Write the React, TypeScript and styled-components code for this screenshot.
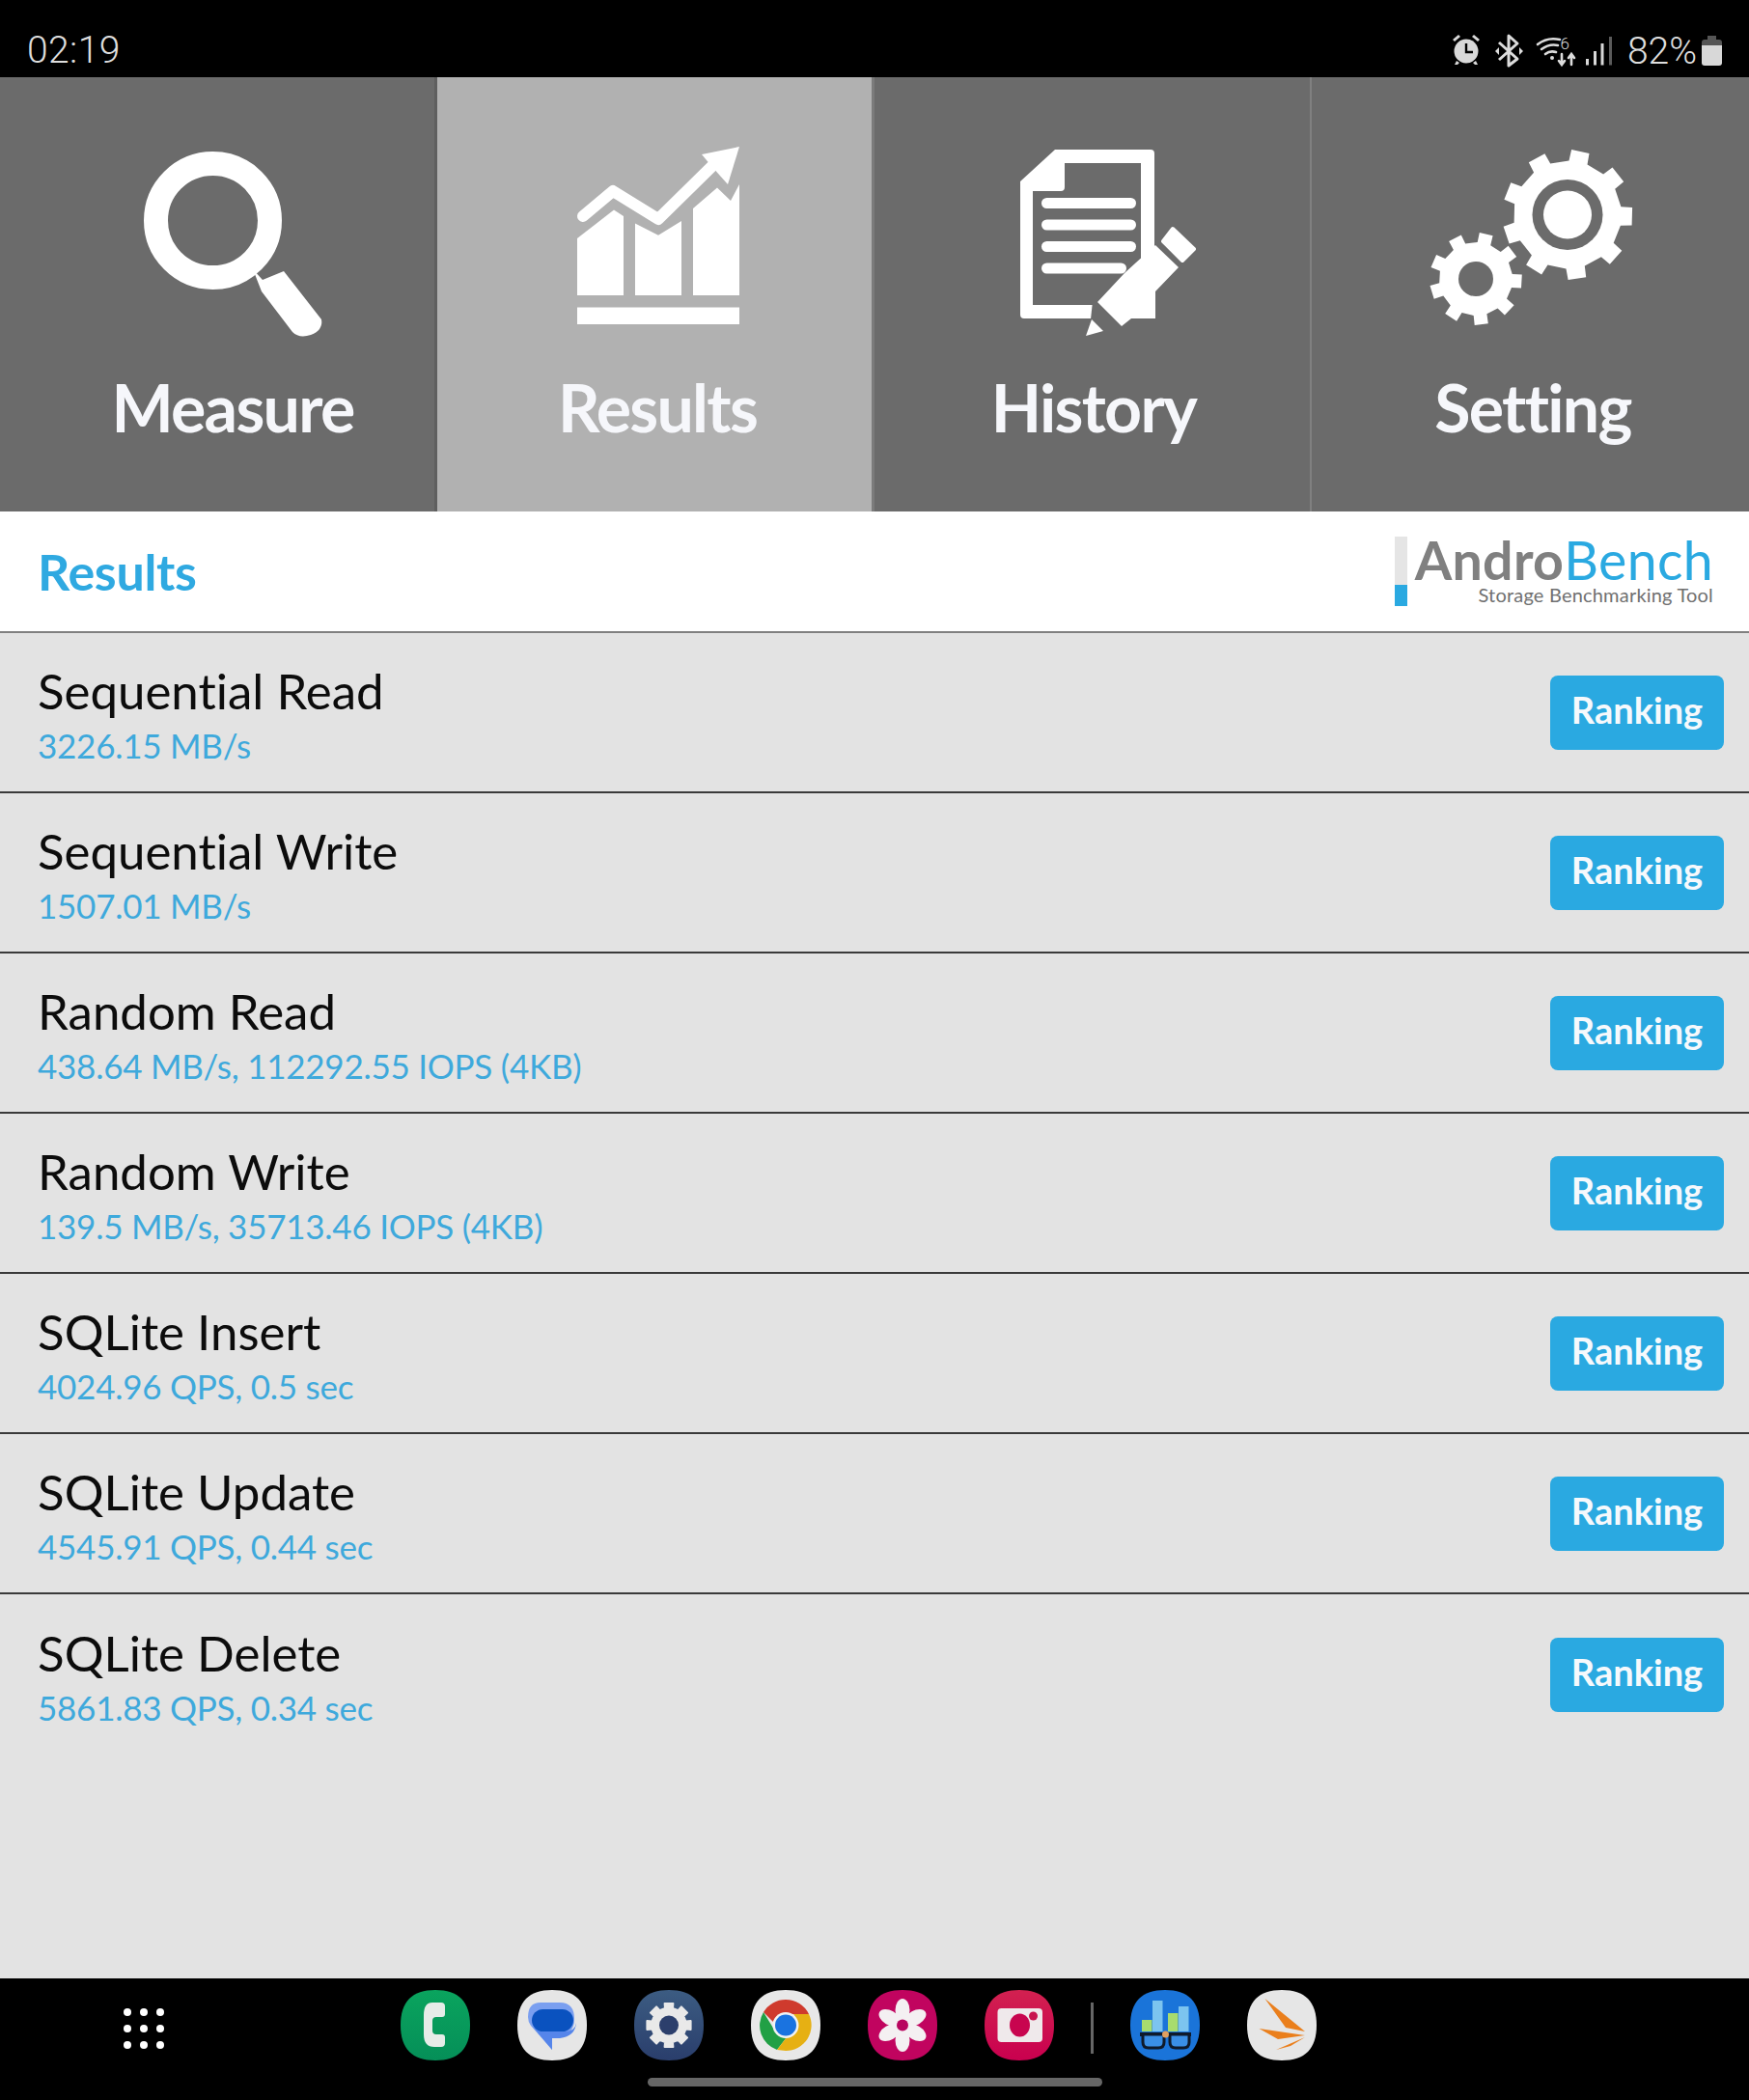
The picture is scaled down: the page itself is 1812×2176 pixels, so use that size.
import React from 'react';
import styled, { createGlobalStyle } from 'styled-components';

const Global = createGlobalStyle`
  html, body { margin: 0; padding: 0; background: #000; }
  * { box-sizing: border-box; }
`;

const TEXT_FONT = `Lato, "Open Sans", "Liberation Sans", sans-serif`;
const BLUE = '#2aa9e1';
const TAB_GREY = '#6b6b6b';
const ACTIVE_GREY = '#b1b1b1';

const Page = styled.div`
  width: 1812px;
  height: 2176px;
  display: flex;
  flex-direction: column;
  background: #e3e3e3;
  font-family: ${TEXT_FONT};
  font-variant-ligatures: none;
`;

const StatusBar = styled.header`
  height: 80px;
  background: #000;
  display: flex;
  align-items: flex-start;
  justify-content: space-between;
  padding: 0 28px 0 28px;
  color: #dedede;
  font-family: Roboto, sans-serif;
  font-weight: 300;
`;
const Clock = styled.span`
  font-size: 39px;
  line-height: 40px;
  padding-top: 32px;
  letter-spacing: 0.4px;
`;
const StatusRight = styled.div`
  display: flex;
  align-items: flex-start;
`;
const StatusGlyphs = styled.svg`
  width: 181px;
  height: 80px;
  display: block;
`;
const Percent = styled.span`
  font-size: 39px;
  line-height: 40px;
  padding-top: 33px;
  margin-right: 5px;
`;
const Battery = styled.svg`
  width: 21px;
  height: 80px;
  display: block;
`;

const Tabs = styled.nav`
  height: 450px;
  display: grid;
  grid-template-columns: repeat(4, 453px);
`;
const Tab = styled.div<{ $active?: boolean; $inset: number; $edge: string; $edgeWidth: number }>`
  background: ${(p) => (p.$active ? ACTIVE_GREY : TAB_GREY)};
  border-right: ${(p) => `${p.$edgeWidth}px solid ${p.$edge}`};
  padding: 60px 0 0 ${(p) => p.$inset}px;
  display: flex;
  flex-direction: column;
  align-items: center;
`;
const TabIcon = styled.svg`
  width: 240px;
  height: 220px;
  display: block;
  flex: none;
`;
const TabLabel = styled.span`
  font-size: 68px;
  font-weight: 700;
  line-height: 80px;
  color: #f6f7fb;
  margin-top: 22px;
  letter-spacing: -1.7px;
`;

const Header = styled.div`
  height: 126px;
  background: #fff;
  border-bottom: 2px solid #808080;
  display: flex;
  align-items: flex-start;
  justify-content: space-between;
  padding: 0 37px 0 39px;
`;
const HeaderTitle = styled.h1`
  margin: 31px 0 0;
  font-size: 52px;
  line-height: 62px;
  font-weight: 700;
  color: #2fa9e1;
  letter-spacing: -0.3px;
`;
const Logo = styled.div`
  display: flex;
  margin-top: 26px;
`;
const LogoBar = styled.div`
  width: 13px;
  height: 72px;
  margin-right: 8px;
  background: linear-gradient(#e5e5e5 0 50px, ${BLUE} 50px);
`;
const LogoText = styled.div`
  display: flex;
  flex-direction: column;
  align-items: flex-end;
`;
const LogoName = styled.div`
  font-size: 55.5px;
  line-height: 48px;
  color: ${BLUE};
  letter-spacing: 0.3px;
  b { color: #808080; font-weight: 700; }
`;
const LogoTag = styled.div`
  font-size: 20px;
  line-height: 24px;
  color: #707070;
  letter-spacing: 0.2px;
`;

const List = styled.main`
  flex: 1;
  background: #e3e3e3;
`;
const Row = styled.div<{ $last?: boolean }>`
  height: 166px;
  padding: 0 26px 0 39px;
  display: flex;
  align-items: center;
  justify-content: space-between;
  border-bottom: ${(p) => (p.$last ? 'none' : '2px solid #3a3a3a')};
`;
const RowText = styled.div`
  display: flex;
  flex-direction: column;
  gap: 4px;
  padding-top: 4px;
`;
const RowName = styled.div`
  font-size: 51px;
  line-height: 60px;
  color: #0c0c0c;
`;
const RowValue = styled.div`
  font-size: 35px;
  line-height: 44px;
  color: #3ea9dc;
  letter-spacing: -0.25px;
`;
const RankButton = styled.button`
  width: 180px;
  height: 77px;
  border: none;
  border-radius: 8px;
  background: ${BLUE};
  color: #f6f9fc;
  font-family: ${TEXT_FONT};
  font-size: 38px;
  font-weight: 700;
  padding: 0 0 6px;
`;

const NavBar = styled.footer`
  height: 126px;
  background: #000;
  display: flex;
  flex-direction: column;
  align-items: center;
`;
const NavRow = styled.div`
  align-self: stretch;
  height: 103px;
  padding: 12px 0 0 128px;
  display: flex;
  align-items: flex-start;
`;
const AppGrid = styled.svg`
  width: 42px;
  height: 42px;
  margin: 19px 245px 0 0;
  display: block;
  flex: none;
`;
const DockIcon = styled.svg`
  width: 72px;
  height: 73px;
  margin-right: 49px;
  display: block;
  flex: none;
`;
const DockRule = styled.div`
  width: 3px;
  height: 53px;
  margin: 13px 38px 0 -11px;
  background: #666;
  flex: none;
`;
const HomePill = styled.div`
  width: 471px;
  height: 9px;
  border-radius: 5px;
  background: #666;
`;

function gearPath(cx: number, cy: number, outer: number, body: number, teeth: number, start: number, half: number) {
  const pts: string[] = [];
  const at = (r: number, deg: number) => {
    const a = ((deg - 90) * Math.PI) / 180;
    return `${(cx + r * Math.cos(a)).toFixed(1)} ${(cy + r * Math.sin(a)).toFixed(1)}`;
  };
  for (let i = 0; i < teeth; i++) {
    const c = start + (i * 360) / teeth;
    pts.push(at(body, c - half - 2), at(outer, c - half), at(outer, c + half), at(body, c + half + 2));
  }
  return `M${pts.join('L')}Z`;
}

const iconBox = (center: number) => `${center - 120} 140 240 220`;

const SearchIcon = () => (
  <TabIcon viewBox={iconBox(241)}>
    <circle cx="220.5" cy="228.5" r="59" fill="none" stroke="#fff" strokeWidth="25" />
    <path d="M262 279L272 290L294 281L333 331Q335 342 322 347Q310 351 303 344L271 302Z" fill="#fff" />
  </TabIcon>
);

const ChartIcon = () => (
  <TabIcon viewBox={iconBox(681)}>
    <g fill="#fff">
      <path d="M598 247L636 217.6L646 224V306H598Z" />
      <path d="M658 231.4L682 243.8L706 229V306H658Z" />
      <path d="M718 216L743 194.6L757 208L766 191V306H718Z" />
      <rect x="598" y="318.5" width="168" height="17.5" />
      <path d="M766 152L727 160L737 172L754 191Z" />
    </g>
    <path d="M604 224L635 198L682 227L742 168" fill="none" stroke="#fff" strokeWidth="12" strokeLinecap="round" strokeLinejoin="round" />
  </TabIcon>
);

const DocIcon = () => (
  <TabIcon viewBox={iconBox(1133)}>
    <path
      fillRule="evenodd"
      fill="#fff"
      d="M1093 155H1192Q1196 155 1196 159V326Q1196 330 1192 330H1061Q1057 330 1057 326V188ZM1103 169V194Q1103 198 1099 198H1070V316H1182V169Z"
    />
    <g fill="#fff">
      <rect x="1079" y="205" width="98" height="11" rx="5.5" />
      <rect x="1079" y="227.5" width="98" height="11" rx="5.5" />
      <rect x="1079" y="250" width="98" height="11" rx="5.5" />
      <rect x="1079" y="272.500" width="88" height="11" rx="5.5" />
    </g>
    <path d="M1132 312H1142L1160 331H1130Z" fill={TAB_GREY} />
    <path d="M1137 313L1165 283L1177 272L1197 254L1221 277L1197 302V330H1172L1162 338Z" fill="#fff" />
    <path d="M1125 348L1143 343L1131 331Z" fill="#fff" />
    <path d="M1215 237L1237 258L1225 270L1205 250Z" fill="#fff" stroke="#fff" strokeWidth="4" strokeLinejoin="round" />
  </TabIcon>
);

const GearsIcon = () => (
  <TabIcon viewBox={iconBox(1588)}>
    <path d={gearPath(1624, 222.5, 67.5, 56, 9, 11.5, 8)} fill="#fff" />
    <circle cx="1624" cy="222.5" r="36.5" fill={TAB_GREY} />
    <circle cx="1624" cy="222.5" r="25" fill="#fff" />
    <path d={gearPath(1529, 289, 48, 38, 9, 13, 8.5)} fill="#fff" />
    <circle cx="1529" cy="289" r="18" fill={TAB_GREY} />
  </TabIcon>
);

const Squircle = ({ fill }: { fill: string }) => (
  <path d="M36 0C60 0 72 12 72 36.500C72 61 60 73 36 73C12 73 0 61 0 36.500C0 12 12 0 36 0Z" fill={fill} />
);

const petals = [0, 60, 120, 180, 240, 300];

const rows = [
  ['Sequential Read', '3226.15 MB/s'],
  ['Sequential Write', '1507.01 MB/s'],
  ['Random Read', '438.64 MB/s, 112292.55 IOPS (4KB)'],
  ['Random Write', '139.5 MB/s, 35713.46 IOPS (4KB)'],
  ['SQLite Insert', '4024.96 QPS, 0.5 sec'],
  ['SQLite Update', '4545.91 QPS, 0.44 sec'],
  ['SQLite Delete', '5861.83 QPS, 0.34 sec'],
];

export default function App() {
  return (
    <Page>
      <Global />
      <StatusBar>
        <Clock>02:19</Clock>
        <StatusRight>
          <StatusGlyphs viewBox="1505 0 181 80">
            <g fill="#d8d8d8">
              <circle cx="1519" cy="53" r="12.500" />
              <path d="M1505 41L1511 36L1513 38L1507 43Z M1533 41L1527 36L1525 38L1531 43Z M1509 63L1507 67L1510 67L1512 65Z M1529 63L1531 67L1528 67L1526 65Z" />
            </g>
            <path d="M1519 45V54H1526" fill="none" stroke="#000" strokeWidth="2.400" />
            <path d="M1553 44L1572 61L1563 68V37L1572 45L1553 62" fill="none" stroke="#dcdcdc" strokeWidth="3" strokeLinejoin="round" />
            <path d="M1549 53L1553 49V57Z M1578 53L1574 49V57Z" fill="#dcdcdc" />
            <g fill="none" stroke="#dcdcdc" strokeWidth="2.600" strokeLinecap="round">
              <path d="M1593 46Q1603 38 1616 41" />
              <path d="M1597 51Q1605 45 1614 47" />
              <path d="M1601 56Q1606 52 1612 54" />
              <path d="M1618 56V66M1615 63L1618 67L1621 63" />
              <path d="M1628 67V57M1625 60L1628 56L1631 60" />
            </g>
            <circle cx="1608" cy="60" r="2" fill="#dcdcdc" />
            <text x="1616.500" y="51" fontSize="17" fontFamily="Roboto, sans-serif" fill="#dcdcdc">6</text>
            <g fill="#d8d8d8">
              <rect x="1643" y="61" width="3" height="6.500" />
              <rect x="1651" y="53" width="3" height="14.500" />
              <rect x="1658.500" y="45" width="3" height="22.500" />
              <rect x="1667" y="38" width="3" height="29.500" fill="#5a5a5a" />
            </g>
          </StatusGlyphs>
          <Percent>82%</Percent>
          <Battery viewBox="0 0 21 80">
            <path d="M6 37H15V41H18Q21 41 21 44V47H0V44Q0 41 3 41H6Z" fill="#555" />
            <path d="M0 47H21V65Q21 68 18 68H3Q0 68 0 65Z" fill="#d8d8d8" />
          </Battery>
        </StatusRight>
      </StatusBar>

      <Tabs>
        <Tab $inset={32} $edge="#5f5f5f" $edgeWidth={3}>
          <SearchIcon />
          <TabLabel>Measure</TabLabel>
        </Tab>
        <Tab $active $inset={6} $edge="#7b7b7b" $edgeWidth={3}>
          <ChartIcon />
          <TabLabel>Results</TabLabel>
        </Tab>
        <Tab $inset={3} $edge="#808080" $edgeWidth={2}>
          <DocIcon />
          <TabLabel>History</TabLabel>
        </Tab>
        <Tab $inset={5} $edge={TAB_GREY} $edgeWidth={0}>
          <GearsIcon />
          <TabLabel>Setting</TabLabel>
        </Tab>
      </Tabs>

      <Header>
        <HeaderTitle>Results</HeaderTitle>
        <Logo>
          <LogoBar />
          <LogoText>
            <LogoName>
              <b>Andro</b>Bench
            </LogoName>
            <LogoTag>Storage Benchmarking Tool</LogoTag>
          </LogoText>
        </Logo>
      </Header>

      <List>
        {rows.map(([name, value], i) => (
          <Row key={name} $last={i === rows.length - 1}>
            <RowText>
              <RowName>{name}</RowName>
              <RowValue>{value}</RowValue>
            </RowText>
            <RankButton>Ranking</RankButton>
          </Row>
        ))}
      </List>

      <NavBar>
        <NavRow>
          <AppGrid viewBox="0 0 42 42">
            <g fill="#fff">
              {[4, 21, 38].flatMap((y) =>
                [4, 21, 38].map((x) => <circle key={`${x}-${y}`} cx={x} cy={y} r="4" />),
              )}
            </g>
          </AppGrid>

          <DockIcon viewBox="0 0 72 73">
            <defs>
              <linearGradient id="phoneTile" x1="0" y1="0" x2="0" y2="1">
                <stop offset="0" stopColor="#0aa45e" />
                <stop offset="1" stopColor="#058f58" />
              </linearGradient>
            </defs>
            <Squircle fill="url(#phoneTile)" />
            <path d="M33 13H42Q46 13 46 17V25Q46 28 43 28H37Q33 28 33 32V42Q33 46 37 46H43Q46 46 46 49V55Q46 59 42 59H35Q24 59 24 46V26Q24 13 33 13Z" fill="#e6ece8" />
          </DockIcon>

          <DockIcon viewBox="0 0 72 73">
            <Squircle fill="#e6e6e6" />
            <path d="M24 13H44Q59 13 59 30Q59 45 44 49H36V62L14 37Q11 33 11 28Q11 13 24 13Z" fill="#7a9ff0" />
            <path d="M15 37L36 62V50H44Q60 48 61 34Q60 44 46 43H26Q20 43 15 37Z" fill="#5585ea" />
            <rect x="15" y="20" width="43" height="23" rx="11.500" fill="#0a52bf" />
          </DockIcon>

          <DockIcon viewBox="0 0 72 73">
            <defs>
              <linearGradient id="setTile" x1="0" y1="0" x2="0" y2="1">
                <stop offset="0" stopColor="#3c5c82" />
                <stop offset="1" stopColor="#2a3e6c" />
              </linearGradient>
            </defs>
            <Squircle fill="url(#setTile)" />
            <path d={gearPath(36, 36.5, 23, 18, 8, 0, 11)} fill="#e9e9e9" stroke="#e9e9e9" strokeWidth="2" strokeLinejoin="round" />
            <circle cx="36" cy="36.500" r="10" fill="#2c3f6c" />
          </DockIcon>

          <DockIcon viewBox="0 0 72 73">
            <Squircle fill="#e8e8e8" />
            <path d="M36 10A26.500 26.500 0 0 1 60 25H36Q26 25 23 33L13 23A26.500 26.500 0 0 1 36 10Z" fill="#cf3a2d" />
            <path d="M13 23L24 41Q29 49 37 49L27 62A26.500 26.500 0 0 1 13 23Z" fill="#21a045" />
            <path d="M60 25A26.500 26.500 0 0 1 36 63L27 62L37 49Q48 47 48 36Q48 30 44 25Z" fill="#e6b013" />
            <circle cx="36" cy="36.500" r="13.500" fill="#f2f2f2" />
            <circle cx="36" cy="36.500" r="11" fill="#1a73e0" />
          </DockIcon>

          <DockIcon viewBox="0 0 72 73">
            <Squircle fill="#c1045f" />
            <g fill="#f4f0f2">
              {petals.map((deg) => (
                <ellipse key={deg} cx="36" cy="21" rx="7.500" ry="12" transform={`rotate(${deg} 36 36.500)`} />
              ))}
            </g>
            <circle cx="36" cy="36.500" r="6" fill="#b8065f" />
          </DockIcon>

          <DockIcon viewBox="0 0 72 73">
            <defs>
              <linearGradient id="camTile" x1="0" y1="0" x2="0" y2="1">
                <stop offset="0" stopColor="#d22150" />
                <stop offset="1" stopColor="#c9004f" />
              </linearGradient>
            </defs>
            <Squircle fill="url(#camTile)" />
            <rect x="13.500" y="19" width="46.500" height="35" rx="4" fill="#efe9eb" />
            <ellipse cx="36.500" cy="36.500" rx="10.500" ry="12" fill="#c8054f" />
            <circle cx="50.500" cy="27" r="4.500" fill="#c8154f" />
          </DockIcon>

          <DockRule />

          <DockIcon viewBox="0 0 72 73">
            <Squircle fill="#1a74d9" />
            <rect x="23" y="11" width="10.500" height="32" fill="#7cc4ef" />
            <rect x="50" y="17" width="10.500" height="26" fill="#7cc4ef" />
            <rect x="12" y="31" width="10.500" height="12" fill="#a8dc6e" />
            <rect x="39" y="24" width="10.500" height="19" fill="#a8dc6e" />
            <rect x="10" y="44" width="53" height="4" fill="#0f1a2a" />
            <path d="M13 46H35V54Q35 60 29 60H19Q13 60 13 54Z" fill="#3a8fe6" stroke="#0f1a2a" strokeWidth="3" />
            <path d="M41 46H61V54Q61 60 55 60H47Q41 60 41 54Z" fill="#3a8fe6" stroke="#0f1a2a" strokeWidth="3" />
            <circle cx="36.500" cy="46" r="3.500" fill="#e0a060" />
          </DockIcon>

          <DockIcon viewBox="0 0 72 73">
            <Squircle fill="#e6e6e6" />
            <g fill="#ea7f1c">
              <path d="M18.500 9L60 43L40 39Z" />
              <path d="M12.500 40L60 47L32 51Z" />
              <path d="M30 62L60 49L45 58Z" />
            </g>
          </DockIcon>
        </NavRow>
        <HomePill />
      </NavBar>
    </Page>
  );
}
